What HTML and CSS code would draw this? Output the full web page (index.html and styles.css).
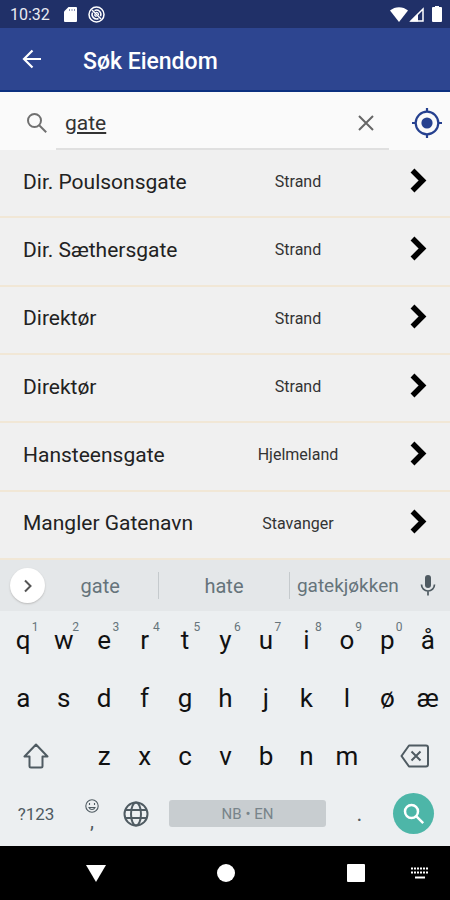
FILE: index.html
```html
<!DOCTYPE html>
<html lang="nb">
	<head>
		<title>Søk Eiendom</title>
		<meta charset="utf-8">
		<meta name="viewport" content="width=device-width, initial-scale=1">
		<link rel="stylesheet" href="styles.css">
	</head>
	<body>
		<div class="status">
			<span class="time">10:32</span>
			<svg width="13" height="15" viewBox="0 0 13 15"><path fill="#fff" d="M4.500 0H12a1 1 0 0 1 1 1v13a1 1 0 0 1-1 1H1a1 1 0 0 1-1-1V4.500z"/><path stroke="#8a93b5" d="M5.500 2v2M8 2v2M10.500 2v2"/></svg>
			<svg class="sync" width="17" height="17" viewBox="0 0 17 17" fill="none" stroke="#fff"><circle cx="8.500" cy="8.500" r="7.500" stroke-width="1.500"/><path stroke-width="1.500" d="M4 4l9 9M6.500 4.700a4.300 4.300 0 0 1 6 5.500M4.500 6.500a4.500 4.500 0 0 0 6 6"/><path stroke-width="1.300" d="M7.500 6.700a2 2 0 0 1 2.800 2.600M6.700 8.300a2 2 0 0 0 2 2"/></svg>
			<span class="signals">
				<svg width="18" height="15" viewBox="0 0 18 15"><path fill="#fff" d="M9 15L0 3.500C5-1 13-1 18 3.500z"/></svg>
				<svg width="15" height="15" viewBox="0 0 15 15"><path fill="none" stroke="#fff" stroke-width="1.500" d="M14 2v12H2z"/><path fill="#fff" d="M1 14.500L9 6.500v8z"/></svg>
				<svg class="battery" width="10" height="16" viewBox="0 0 10 16"><path fill="#fff" d="M3 0h4v1h2a1 1 0 0 1 1 1v13a1 1 0 0 1-1 1H1a1 1 0 0 1-1-1V2a1 1 0 0 1 1-1h2z"/></svg>
			</span>
		</div>

		<header class="appbar">
			<button class="back" aria-label="Tilbake">
				<svg width="20" height="20" viewBox="0 0 20 20" fill="none" stroke="#fff" stroke-width="2.200"><path d="M19 10H2.500M10.500 1.500L2 10l8.500 8.500"/></svg>
			</button>
			<h1>Søk Eiendom</h1>
		</header>

		<form class="search">
			<label for="q" aria-label="Søk">
				<svg width="22" height="22" viewBox="0 0 22 22" fill="none" stroke="#707070" stroke-width="2"><circle cx="8.500" cy="8.500" r="6.500"/><path d="M13.200 13.200l7 7"/></svg>
			</label>
			<div class="field">
				<input type="text" id="q" value="gate" autocomplete="off" spellcheck="false">
				<button type="button" class="clear" aria-label="Tøm">
					<svg width="16" height="16" viewBox="0 0 16 16" fill="none" stroke="#666" stroke-width="2"><path d="M1 1l14 14M15 1L1 15"/></svg>
				</button>
			</div>
			<button type="button" class="locate" aria-label="Min posisjon">
				<svg width="30" height="30" viewBox="0 0 30 30" fill="none" stroke="#25408f" stroke-width="2.200"><circle cx="15" cy="15" r="11.300"/><circle cx="15" cy="15" r="5.600" fill="#25408f" stroke="none"/><path d="M15 0v4M15 26v4M0 15h4M26 15h4"/></svg>
			</button>
		</form>

		<svg class="defs"><symbol id="chevron" viewBox="0 0 17 25"><path fill="none" stroke="#000" stroke-width="5.500" d="M2.500 2.500L12.500 12.500L2.500 22.500"/></symbol></svg>

		<main class="results">
			<a class="result" href="#"><span class="name">Dir. Poulsonsgate</span><span class="place">Strand</span><svg class="go"><use href="#chevron"/></svg></a>
			<a class="result" href="#"><span class="name">Dir. Sæthersgate</span><span class="place">Strand</span><svg class="go"><use href="#chevron"/></svg></a>
			<a class="result" href="#"><span class="name">Direktør</span><span class="place">Strand</span><svg class="go"><use href="#chevron"/></svg></a>
			<a class="result" href="#"><span class="name">Direktør</span><span class="place">Strand</span><svg class="go"><use href="#chevron"/></svg></a>
			<a class="result" href="#"><span class="name">Hansteensgate</span><span class="place">Hjelmeland</span><svg class="go"><use href="#chevron"/></svg></a>
			<a class="result" href="#"><span class="name">Mangler Gatenavn</span><span class="place">Stavanger</span><svg class="go"><use href="#chevron"/></svg></a>
		</main>

		<div class="keyboard">
			<div class="suggest">
				<button class="more" aria-label="Mer">
					<svg width="10" height="14" viewBox="0 0 10 14" fill="none" stroke="#555" stroke-width="2"><path d="M2 1.500L7.500 7L2 12.500"/></svg>
				</button>
				<button class="word">gate</button>
				<button class="word best">hate</button>
				<button class="word long">gatekjøkken</button>
				<button class="mic" aria-label="Tale">
					<svg width="16" height="21" viewBox="0 0 16 21"><rect x="5" y="0" width="6" height="13" rx="3" fill="#4f5b62"/><path fill="none" stroke="#4f5b62" stroke-width="1.700" d="M1.500 9.500a6.500 6.500 0 0 0 13 0M8 16v4.500"/></svg>
				</button>
			</div>
			<div class="keys">
				<button>q<sup>1</sup></button><button>w<sup>2</sup></button><button>e<sup>3</sup></button><button>r<sup>4</sup></button><button>t<sup>5</sup></button><button>y<sup>6</sup></button><button>u<sup>7</sup></button><button>i<sup>8</sup></button><button>o<sup>9</sup></button><button>p<sup>0</sup></button><button>å</button>
			</div>
			<div class="keys">
				<button>a</button><button>s</button><button>d</button><button>f</button><button>g</button><button>h</button><button>j</button><button>k</button><button>l</button><button>ø</button><button>æ</button>
			</div>
			<div class="keys">
				<button class="shift" aria-label="Shift">
					<svg width="26" height="26" viewBox="0 0 26 26" fill="none" stroke="#4f5b62" stroke-width="2" stroke-linejoin="round"><path d="M13 1.500L1.500 13.500H6.500V23a1.500 1.500 0 0 0 1.500 1.500h10a1.500 1.500 0 0 0 1.500-1.500v-9.500h5z"/></svg>
				</button>
				<button>z</button><button>x</button><button>c</button><button>v</button><button>b</button><button>n</button><button>m</button>
				<button class="erase" aria-label="Slett">
					<svg width="29" height="24" viewBox="0 0 29 24" fill="none" stroke="#4f5b62" stroke-width="2"><path stroke-linejoin="round" d="M9 1.500h17a2 2 0 0 1 2 2v17a2 2 0 0 1-2 2H9L1.500 12z"/><path d="M11.500 7.500l9 9M20.500 7.500l-9 9"/></svg>
				</button>
			</div>
			<div class="bottom">
				<button class="sym">?123</button>
				<button class="comma" aria-label="Komma">
					<svg width="14" height="14" viewBox="0 0 14 14" fill="none" stroke="#4f5b62" stroke-width="1.100"><circle cx="7" cy="7" r="6.200"/><path d="M4 8.500a3.300 3.300 0 0 0 6 0zM4.500 4v2M9.500 4v2"/></svg>
					<span>,</span>
				</button>
				<button class="globe" aria-label="Språk">
					<svg width="26" height="26" viewBox="0 0 26 26" fill="none" stroke="#4f5b62" stroke-width="2"><circle cx="13" cy="13" r="11.500"/><ellipse cx="13" cy="13" rx="5" ry="11.500"/><path d="M2.500 9h21M2.500 17h21"/></svg>
				</button>
				<button class="space">NB • EN</button>
				<button class="dot">.</button>
				<button class="enter" aria-label="Søk">
					<svg width="22" height="22" viewBox="0 0 22 22" fill="none" stroke="#fff" stroke-width="2.500"><circle cx="8.500" cy="8.500" r="6.500"/><path d="M13.200 13.200l7 7"/></svg>
				</button>
			</div>
		</div>

		<nav class="navbar">
			<button aria-label="Tilbake"><svg width="20" height="17" viewBox="0 0 20 17"><path fill="#fff" d="M0 0h20L10 17z"/></svg></button>
			<button aria-label="Hjem"><svg width="18" height="18" viewBox="0 0 18 18"><circle cx="9" cy="9" r="9" fill="#fff"/></svg></button>
			<button aria-label="Oversikt"><svg width="18" height="18" viewBox="0 0 18 18"><rect width="18" height="18" rx="1" fill="#fff"/></svg></button>
			<button class="ime" aria-label="Tastatur"><svg width="20" height="12" viewBox="0 0 20 12" fill="none" stroke="#fff" stroke-width="2"><path stroke-dasharray="2 1" d="M1 1.500h18M1 5.500h18"/><path d="M5 10.500h10"/></svg></button>
		</nav>
	</body>
</html>
```
FILE: styles.css
```css
* {box-sizing: border-box;}
body {
	margin: 0;
	min-height: 100vh;
	display: flex;
	flex-direction: column;
	background: #f0f0f0;
	color: #222;
	font-family: Roboto, sans-serif;
}
svg {display: block; flex: none;}
button {
	display: flex;
	align-items: center;
	justify-content: center;
	padding: 0;
	border: none;
	background: none;
	color: inherit;
	font: inherit;
}
.defs {width: 0; height: 0; position: absolute;}

.status {
	display: flex;
	align-items: center;
	height: 28px;
	padding: 0 8px 0 10px;
	background: #203068;
	color: #e8eaf2;
	font-size: 16px;
}
.time {margin-right: 14px;}
.sync {margin-left: 11px;}
.signals {display: flex; align-items: center; gap: 1px; margin-left: auto;}
.battery {margin-left: 7px;}

.appbar {
	display: flex;
	align-items: center;
	height: 64px;
	padding-left: 12px;
	background: #2d4590;
	border-bottom: 2px solid #0c3080;
	color: #fff;
}
.back {width: 40px; height: 40px;}
h1 {margin: 0 0 0 31px; padding-top: 4px; font-size: 23px; font-weight: 500;}

.search {
	display: flex;
	align-items: center;
	height: 58px;
	padding: 0 8px 0 26px;
	background: #fafafa;
}
.search label {width: 30px; padding-top: 4px;}
.field {
	display: flex;
	align-items: center;
	flex: 1;
	height: 100%;
	padding: 6px 15px 0 9px;
	border-bottom: 2px solid #e0e0e0;
}
.field input {
	flex: 1;
	min-width: 0;
	padding: 0;
	border: none;
	outline: none;
	background: none;
	color: #333;
	font: 21px Roboto, sans-serif;
	text-decoration: underline;
}
.locate {margin-left: 23px; padding-top: 4px;}

.results {flex: 1; display: flex; flex-direction: column;}
.result {
	flex: 1;
	display: grid;
	grid-template-columns: 1fr 116px 94px;
	align-items: center;
	min-height: 56px;
	padding: 0 0 3px 23px;
	border-bottom: 2px solid #f1e7d6;
	color: #222;
	text-decoration: none;
}
.name {font-size: 21px;}
.place {font-size: 16px; text-align: center; color: #333;}
.go {width: 17px; height: 25px; justify-self: end; margin: 0 23px 3px 0;}

.keyboard {background: #eceff1; color: #111; padding-bottom: 4px;}
.suggest {
	display: flex;
	align-items: center;
	height: 51px;
	padding: 0 14px 0 10px;
	background: #e4e7e9;
	color: #66747b;
	font-size: 20px;
}
.more {
	width: 35px;
	height: 35px;
	margin-right: -3px;
	border-radius: 50%;
	background: #fff;
	box-shadow: 0 1px 2px #bbb;
}
.word {flex: 117 1 0; height: 27px; min-width: 0;}
.word + .word {border-left: 1px solid #c5cacd;}
.best {flex-grow: 130;}
.long {font-size: 19px;}
.mic {width: 16px; margin-left: 14px;}

.keys {
	display: grid;
	grid-template-columns: repeat(11, 1fr);
	height: 58px;
	padding: 0 2px 0 3px;
	font-size: 26px;
}
.keys button {position: relative;}
.keys sup {
	position: absolute;
	top: 8px;
	right: 5px;
	color: #66747b;
	font-size: 12px;
	line-height: 16px;
}
.keys .shift {grid-column: span 2; justify-content: flex-start; padding-left: 20px;}
.keys .erase {grid-column: span 2; justify-content: flex-end; padding-right: 19px;}

.bottom {
	display: flex;
	align-items: center;
	height: 57px;
	padding: 0 16px 0 3px;
	color: #4f5b62;
}
.sym {width: 66px; font-size: 17px;}
.comma {width: 46px; flex-direction: column;}
.comma span {font-size: 20px; line-height: 16px;}
.globe {width: 42px;}
.space {
	flex: 1;
	height: 27px;
	margin-left: 12px;
	border-radius: 3px;
	background: #c8cdd0;
	color: #78848a;
	font-size: 15px;
}
.dot {width: 67px; font-size: 22px;}
.enter {width: 41px; height: 41px; border-radius: 50%; background: #4db6a8;}

.navbar {
	display: flex;
	align-items: center;
	justify-content: space-between;
	height: 54px;
	padding: 0 20px 0 86px;
	background: #000;
}
.ime {margin-left: -66px;}
```
